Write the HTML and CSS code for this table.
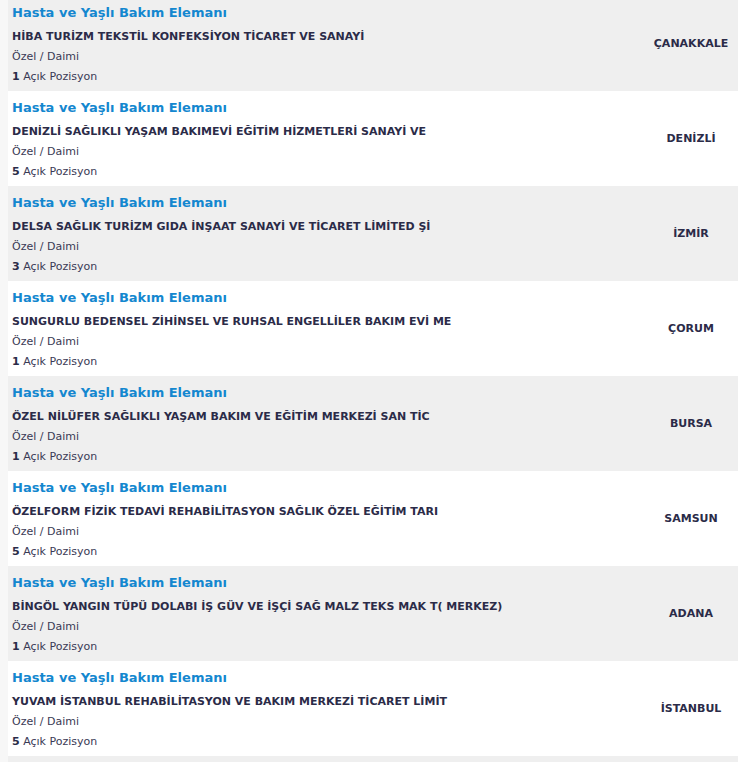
FILE: index.html
```html
<!DOCTYPE html>
<html lang="tr">
<head>
<meta charset="utf-8">
<link rel="stylesheet" href="styles.css">
</head>
<body>
<div class="list">
  <div class="row">
    <div class="info">
      <div class="title">Hasta ve Yaşlı Bakım Elemanı</div>
      <div class="company">HİBA TURİZM TEKSTİL KONFEKSİYON TİCARET VE SANAYİ</div>
      <div class="meta">Özel / Daimi</div>
      <div class="meta"><b>1</b> Açık Pozisyon</div>
    </div>
    <div class="city">ÇANAKKALE</div>
  </div>
  <div class="row">
    <div class="info">
      <div class="title">Hasta ve Yaşlı Bakım Elemanı</div>
      <div class="company">DENİZLİ SAĞLIKLI YAŞAM BAKIMEVİ EĞİTİM HİZMETLERİ SANAYİ VE</div>
      <div class="meta">Özel / Daimi</div>
      <div class="meta"><b>5</b> Açık Pozisyon</div>
    </div>
    <div class="city">DENİZLİ</div>
  </div>
  <div class="row">
    <div class="info">
      <div class="title">Hasta ve Yaşlı Bakım Elemanı</div>
      <div class="company">DELSA SAĞLIK TURİZM GIDA İNŞAAT SANAYİ VE TİCARET LİMİTED Şİ</div>
      <div class="meta">Özel / Daimi</div>
      <div class="meta"><b>3</b> Açık Pozisyon</div>
    </div>
    <div class="city">İZMİR</div>
  </div>
  <div class="row">
    <div class="info">
      <div class="title">Hasta ve Yaşlı Bakım Elemanı</div>
      <div class="company">SUNGURLU BEDENSEL ZİHİNSEL VE RUHSAL ENGELLİLER BAKIM EVİ ME</div>
      <div class="meta">Özel / Daimi</div>
      <div class="meta"><b>1</b> Açık Pozisyon</div>
    </div>
    <div class="city">ÇORUM</div>
  </div>
  <div class="row">
    <div class="info">
      <div class="title">Hasta ve Yaşlı Bakım Elemanı</div>
      <div class="company">ÖZEL NİLÜFER SAĞLIKLI YAŞAM BAKIM VE EĞİTİM MERKEZİ SAN TİC</div>
      <div class="meta">Özel / Daimi</div>
      <div class="meta"><b>1</b> Açık Pozisyon</div>
    </div>
    <div class="city">BURSA</div>
  </div>
  <div class="row">
    <div class="info">
      <div class="title">Hasta ve Yaşlı Bakım Elemanı</div>
      <div class="company">ÖZELFORM FİZİK TEDAVİ REHABİLİTASYON SAĞLIK ÖZEL EĞİTİM TARI</div>
      <div class="meta">Özel / Daimi</div>
      <div class="meta"><b>5</b> Açık Pozisyon</div>
    </div>
    <div class="city">SAMSUN</div>
  </div>
  <div class="row">
    <div class="info">
      <div class="title">Hasta ve Yaşlı Bakım Elemanı</div>
      <div class="company">BİNGÖL YANGIN TÜPÜ DOLABI İŞ GÜV VE İŞÇİ SAĞ MALZ TEKS MAK T( MERKEZ)</div>
      <div class="meta">Özel / Daimi</div>
      <div class="meta"><b>1</b> Açık Pozisyon</div>
    </div>
    <div class="city">ADANA</div>
  </div>
  <div class="row">
    <div class="info">
      <div class="title">Hasta ve Yaşlı Bakım Elemanı</div>
      <div class="company">YUVAM İSTANBUL REHABİLİTASYON VE BAKIM MERKEZİ TİCARET LİMİT</div>
      <div class="meta">Özel / Daimi</div>
      <div class="meta"><b>5</b> Açık Pozisyon</div>
    </div>
    <div class="city">İSTANBUL</div>
  </div>
  <div class="row"></div>
</div>
</body>
</html>
```
FILE: styles.css
```css
html, body {
  margin: 0;
  padding: 0;
}
body {
  background: #f7f7f7;
  font-family: "DejaVu Sans", Verdana, sans-serif;
  overflow: hidden;
}
.list {
  margin-top: -4px;
  padding-left: 8px;
}
.row {
  display: grid;
  grid-template-columns: 1fr 94px;
  height: 95px;
  box-sizing: border-box;
  background: #efefef;
}
.row:nth-child(even) {
  background: #ffffff;
}
.info {
  padding: 8px 0 0 4px;
}
.title {
  font-size: 13px;
  font-weight: bold;
  line-height: 18px;
  color: #1487cf;
  margin-bottom: 5px;
}
.company {
  font-size: 11px;
  font-weight: bold;
  line-height: 20px;
  color: #2b2b48;
}
.meta {
  font-size: 11px;
  line-height: 20px;
  color: #3a3a55;
}
.meta b {
  color: #2b2b48;
}
.city {
  display: flex;
  align-items: center;
  justify-content: center;
  font-size: 11px;
  font-weight: bold;
  color: #2b2b48;
}
```
